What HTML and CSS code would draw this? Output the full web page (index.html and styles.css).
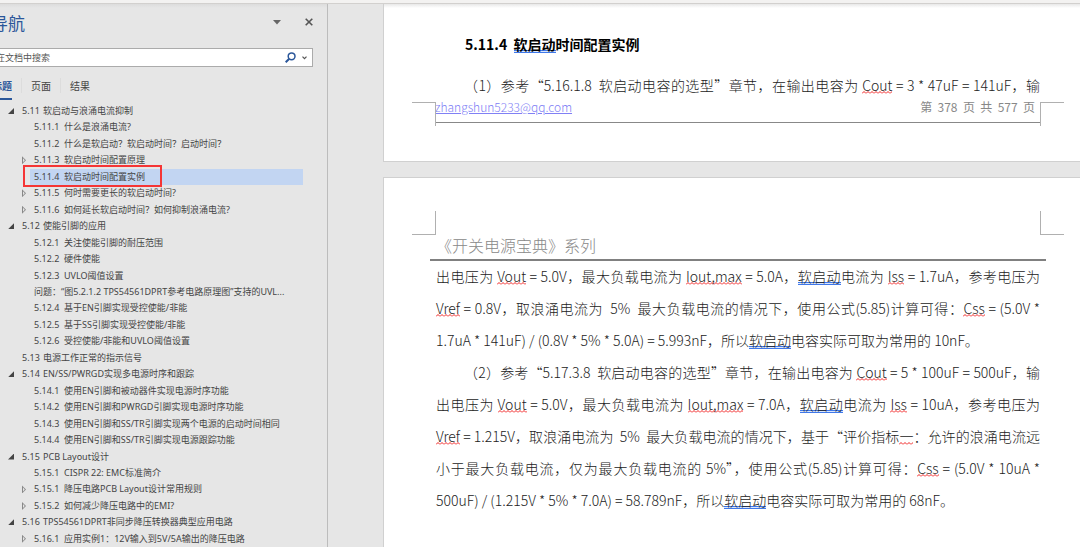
FILE: index.html
```html
<!DOCTYPE html>
<html lang="zh-CN">
<head>
<meta charset="utf-8">
<title>导航</title>
<link rel="stylesheet" href="styles.css">
</head>
<body>
<div class="ribbon-edge"></div>
<div class="workspace">
  <aside class="nav">
    <header class="nav-head">
      <h1 class="nav-title">导航</h1>
      <button class="icon-btn" aria-label="选项"><svg width="8" height="5" viewBox="0 0 8 5"><path d="M0 0h8L4 4.5z" fill="#666"/></svg></button>
      <button class="icon-btn" aria-label="关闭"><svg width="8" height="8" viewBox="0 0 8 8"><path d="M.7.7l6.6 6.6M7.300.7L.7 7.300" stroke="#555" stroke-width="1.600"/></svg></button>
    </header>
    <div class="search">
      <input class="search-input" type="text" placeholder="在文档中搜索" aria-label="在文档中搜索">
      <button class="icon-btn" aria-label="搜索"><svg width="11" height="11" viewBox="0 0 11 11"><circle cx="6.600" cy="4.300" r="3.400" fill="none" stroke="#2b579a" stroke-width="1.500"/><path d="M4.200 6.800L.7 10.300" stroke="#2b579a" stroke-width="2"/></svg></button>
      <button class="icon-btn" aria-label="搜索选项"><svg width="5" height="4" viewBox="0 0 5 4"><path d="M.5.7l2 2 2-2" fill="none" stroke="#555" stroke-width="1.200"/></svg></button>
    </div>
    <nav class="tabs">
      <button class="tab tab-on">标题</button>
      <button class="tab">页面</button>
      <button class="tab">结果</button>
    </nav>
    <ul class="tree">
      <li class="row open"><span class="num">5.11</span>软启动与浪涌电流抑制</li>
      <li class="row sub"><span class="num">5.11.1</span>什么是浪涌电流?</li>
      <li class="row sub"><span class="num">5.11.2</span>什么是软启动？软启动时间？启动时间？</li>
      <li class="row sub closed"><span class="num">5.11.3</span>软启动时间配置原理</li>
      <li class="row sub current"><span class="num">5.11.4</span>软启动时间配置实例</li>
      <li class="row sub closed"><span class="num">5.11.5</span>何时需要更长的软启动时间?</li>
      <li class="row sub closed"><span class="num">5.11.6</span>如何延长软启动时间？如何抑制浪涌电流?</li>
      <li class="row open"><span class="num">5.12</span>使能引脚的应用</li>
      <li class="row sub"><span class="num">5.12.1</span>关注使能引脚的耐压范围</li>
      <li class="row sub"><span class="num">5.12.2</span>硬件使能</li>
      <li class="row sub"><span class="num">5.12.3</span>UVLO阈值设置</li>
      <li class="row sub">问题：“图5.2.1.2 TPS54561DPRT参考电路原理图”支持的UVL...</li>
      <li class="row sub"><span class="num">5.12.4</span>基于EN引脚实现受控使能/非能</li>
      <li class="row sub"><span class="num">5.12.5</span>基于SS引脚实现受控使能/非能</li>
      <li class="row sub"><span class="num">5.12.6</span>受控使能/非能和UVLO阈值设置</li>
      <li class="row"><span class="num">5.13</span>电源工作正常的指示信号</li>
      <li class="row open"><span class="num">5.14</span>EN/SS/PWRGD实现多电源时序和跟踪</li>
      <li class="row sub"><span class="num">5.14.1</span>使用EN引脚和被动器件实现电源时序功能</li>
      <li class="row sub"><span class="num">5.14.2</span>使用EN引脚和PWRGD引脚实现电源时序功能</li>
      <li class="row sub"><span class="num">5.14.3</span>使用EN引脚和SS/TR引脚实现两个电源的启动时间相同</li>
      <li class="row sub"><span class="num">5.14.4</span>使用EN引脚和SS/TR引脚实现电源跟踪功能</li>
      <li class="row open"><span class="num">5.15</span>PCB Layout设计</li>
      <li class="row sub"><span class="num">5.15.1</span>CISPR 22: EMC标准简介</li>
      <li class="row sub closed"><span class="num">5.15.1</span>降压电路PCB Layout设计常用规则</li>
      <li class="row sub closed"><span class="num">5.15.2</span>如何减少降压电路中的EMI?</li>
      <li class="row open"><span class="num">5.16</span>TPS54561DPRT非同步降压转换器典型应用电路</li>
      <li class="row sub closed"><span class="num">5.16.1</span>应用实例1：12V输入到5V/5A输出的降压电路</li>
    </ul>
  </aside>
  <main class="doc">
    <section class="page page-first">
      <h2 class="heading">5.11.4&nbsp; <span class="gram">软启动</span>时间配置实例</h2>
      <p class="line indent">（1）参考“5.16.1.8&nbsp; 软启动电容的选型”章节，在输出电容为 <span class="typo">Cout</span> = 3 * 47uF = 141uF，输</p>
      <footer class="page-foot"><a class="mail" href="mailto:zhangshun5233@qq.com">zhangshun5233@qq.com</a><span>第&nbsp; 378&nbsp; 页&nbsp; 共&nbsp; 577&nbsp; 页</span></footer>
    </section>
    <section class="page page-next">
      <header class="page-head">《开关电源宝典》系列</header>
      <p class="line">出电压为 <span class="typo">Vout</span> = 5.0V，最大负载电流为 <span class="typo">Iout,max</span> = 5.0A，<span class="gram">软启动</span>电流为 <span class="typo">Iss</span> = 1.7uA，参考电压为</p>
      <p class="line"><span class="typo">Vref</span> = 0.8V，取浪涌电流为&nbsp; 5%&nbsp; 最大负载电流的情况下，使用公式(5.85)计算可得：<span class="typo">Css</span> = (5.0V *</p>
      <p class="line last">1.7uA * 141uF) / (0.8V * 5% * 5.0A) = 5.993nF，所以<span class="gram">软启动</span>电容实际可取为常用的 10nF。</p>
      <p class="line indent">（2）参考“5.17.3.8&nbsp; 软启动电容的选型”章节，在输出电容为 <span class="typo">Cout</span> = 5 * 100uF = 500uF，输</p>
      <p class="line">出电压为 <span class="typo">Vout</span> = 5.0V，最大负载电流为 <span class="typo">Iout,max</span> = 7.0A，<span class="gram">软启动</span>电流为 <span class="typo">Iss</span> = 10uA，参考电压为</p>
      <p class="line"><span class="typo">Vref</span> = 1.215V，取浪涌电流为&nbsp; 5%&nbsp; 最大负载电流的情况下，基于“评价指标<span class="typo">一</span>：允许的浪涌电流远</p>
      <p class="line">小于最大负载电流，仅为最大负载电流的 5%”，使用公式(5.85)计算可得：<span class="typo">Css</span> = (5.0V * 10uA *</p>
      <p class="line last">500uF) / (1.215V * 5% * 7.0A) = 58.789nF，所以<span class="gram">软启动</span>电容实际可取为常用的 68nF。</p>
    </section>
  </main>
</div>
</body>
</html>
```
FILE: styles.css
```css
*, *::before, *::after { box-sizing: border-box; margin: 0; padding: 0; }
body {
  height: 100vh;
  display: flex;
  flex-direction: column;
  overflow: hidden;
  background: #e6e6e6;
  font-family: "Noto Sans CJK SC", sans-serif;
}
button { border: 0; background: none; font: inherit; color: inherit; }
.ribbon-edge { flex: none; height: 4px; background: #f3f2f1; border-bottom: 1px solid #d2d0ce; }
.workspace { flex: 1; display: flex; min-height: 0; }

/* navigation pane, scrolled slightly past the left edge */
.nav {
  flex: none;
  width: 338px;
  margin-left: -10px;
  display: flex;
  flex-direction: column;
  border-right: 1px solid #bcbcbc;
  color: #444;
  font-family: "Noto Sans", "Noto Sans CJK SC", sans-serif;
  font-size: 9px;
  background: linear-gradient(#dcdcdc, #e6e6e6 4px);
}
.nav-head { display: flex; align-items: center; gap: 24px; height: 44px; padding: 0 14px 8px 1px; }
.nav-title { flex: 1; font-size: 17px; font-weight: 400; color: #2b579a; }
.icon-btn { display: flex; }
.search {
  display: flex;
  align-items: center;
  gap: 6px;
  height: 19px;
  margin-right: 14px;
  padding: 0 5px 0 5px;
  border: 1px solid #ababab;
  background: #fff;
}
.search-input { flex: 1; min-width: 0; border: 0; outline: 0; font: inherit; background: none; }
.search-input::placeholder { color: #555; opacity: 1; }
.tabs { display: flex; height: 34px; padding-left: 2px; font-size: 10px; }
.tab { position: relative; display: flex; height: 33px; padding-top: 12px; line-height: 15px; margin-right: 19px; }
.tab-on { color: #2b579a; font-weight: 700; border-bottom: 2px solid #2b579a; }
.tab + .tab::before { content: ""; position: absolute; left: -10px; top: 11px; height: 15px; border-left: 1px solid #dcdcdc; }
.tree {
  flex: 1;
  display: flex;
  flex-direction: column;
  justify-content: space-between;
  padding: 2px 24px 0 0;
  list-style: none;
}
.row { position: relative; height: 16px; line-height: 16px; padding-left: 32px; white-space: nowrap; }
.sub { margin-left: 40px; padding-left: 4px; }
.num { display: inline-block; min-width: 21px; }
.sub .num { min-width: 30px; }
.current { background: #c2d5f2; }
.current::after {
  content: "";
  position: absolute;
  left: -7px;
  top: -4px;
  width: 139px;
  height: 22px;
  border: 2px solid #f53535;
}
.open::before {
  content: "";
  position: absolute;
  left: 18px;
  top: 5px;
  width: 6px;
  height: 6px;
  background: #444;
  clip-path: polygon(100% 0, 100% 100%, 0 100%);
}
.closed::before {
  content: "";
  position: absolute;
  left: -8px;
  top: 4px;
  width: 4px;
  height: 8px;
  background: #888;
  clip-path: polygon(0 0, 100% 50%, 0 100%, 0 0, 25% 25%, 25% 75%, 70% 50%, 25% 25%);
}

/* document pages */
.doc { flex: 1; min-width: 0; display: flex; flex-direction: column; gap: 15px; padding-left: 55px; color: #222; font-size: 14px; }
.page { border: 1px solid #d0d0d0; border-right: 0; background: #fff; padding: 0 40px 0 52px; }
.page-first { flex: none; height: 158px; border-top: 0; background: linear-gradient(#e8e8e8, #fff 4px); padding-top: 24px; }
.page-next { flex: 1; padding-top: 56px; border-bottom: 0; }
.heading { font-size: 14px; line-height: 32px; font-weight: 700; color: #000; padding-left: 29px; }
.line { line-height: 32px; height: 32px; font-weight: 300; white-space: nowrap; text-align: justify; text-align-last: justify; }
.last { text-align-last: left; }
.indent { padding-left: 28px; }
.heading + .line { margin-top: 9px; }
.gram {
  padding-bottom: 1px;
  background: linear-gradient(#3f78ea 1px, #dbe6fb 1px, #dbe6fb 2px, #3f78ea 2px) 0 calc(100% - 2px) / 100% 3px no-repeat;
}
.typo {
  padding-bottom: 1px;
  background: url("data:image/svg+xml,%3Csvg xmlns='http://www.w3.org/2000/svg' width='4' height='3'%3E%3Cpath d='M0 2.500L2 .5L4 2.500' fill='none' stroke='%23f02020'/%3E%3C/svg%3E") 0 calc(100% - 2px) repeat-x;
}
.page-foot, .page-head { position: relative; color: #888; }
.page-foot { display: flex; justify-content: space-between; height: 21px; margin: 1px -1px 0; padding-right: 6px; border-bottom: 1px solid #888; font-size: 12px; line-height: 10px; }
.mail { color: #8080f5; font-weight: 300; }
.page-foot::before, .page-foot::after, .page-head::before, .page-head::after {
  content: "";
  position: absolute;
  width: 24px;
  height: 24px;
  border: 0 solid #b0b0b0;
}
.page-foot::before, .page-foot::after { top: 0; border-top-width: 1px; }
.page-head::before, .page-head::after { top: -23px; border-bottom-width: 1px; }
.page-foot::before { left: -23px; border-right-width: 1px; }
.page-foot::after { right: -23px; border-left-width: 1px; }
.page-head::before { left: -18px; border-right-width: 1px; }
.page-head::after { right: -18px; border-left-width: 1px; }
.page-head { height: 27px; margin: 0 -6px; padding-left: 6px; border-bottom: 2px solid #808080; font-size: 16px; font-weight: 300; line-height: 22px; }
.page-head + .line { margin-top: -1px; }
```
